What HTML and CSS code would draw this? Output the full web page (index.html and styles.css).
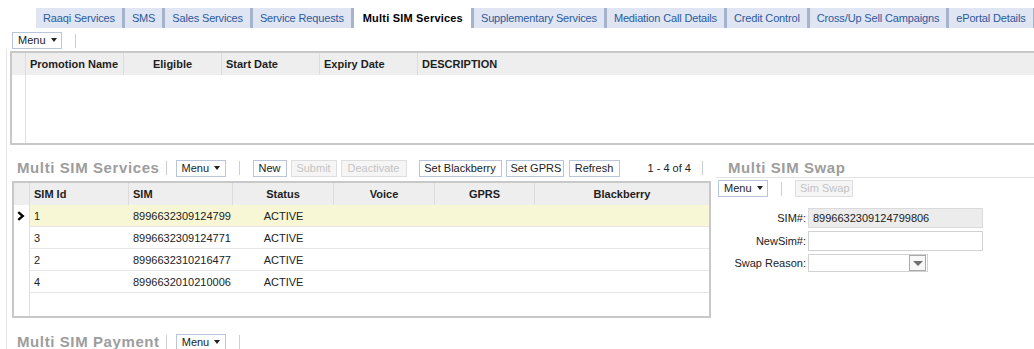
FILE: index.html
```html
<!DOCTYPE html>
<html>
<head>
<meta charset="utf-8">
<title>Multi SIM Services</title>
<link rel="stylesheet" href="styles.css">
</head>
<body>
<div class="tabs">
  <span class="tab">Raaqi Services</span>
  <span class="tab">SMS</span>
  <span class="tab">Sales Services</span>
  <span class="tab">Service Requests</span>
  <span class="tab tab-active">Multi SIM Services</span>
  <span class="tab">Supplementary Services</span>
  <span class="tab">Mediation Call Details</span>
  <span class="tab">Credit Control</span>
  <span class="tab">Cross/Up Sell Campaigns</span>
  <span class="tab">ePortal Details</span>
  <span class="tab tab-rest"></span>
</div>

<div class="toolbar top-toolbar">
  <button type="button" class="btn btn-menu">Menu <span class="caret"></span></button>
  <span class="vsep vsep-wide"></span>
</div>

<div class="main">
  <div class="grid promo-grid">
    <table class="grid-table">
      <colgroup>
        <col class="c-rh-promo"><col class="c-98"><col class="c-98"><col class="c-98"><col class="c-98"><col>
      </colgroup>
      <thead>
        <tr>
          <th class="rh"></th>
          <th>Promotion Name</th>
          <th class="center">Eligible</th>
          <th>Start Date</th>
          <th>Expiry Date</th>
          <th class="last">DESCRIPTION</th>
        </tr>
      </thead>
      <tbody>
        <tr class="empty-body">
          <td class="rh"></td><td></td><td></td><td></td><td></td><td></td>
        </tr>
      </tbody>
    </table>
  </div>

  <div class="section">
    <div class="left-col">
      <div class="sec-head">
        <h2 class="sec-title">Multi SIM Services</h2>
        <span class="vsep vsep-title"></span>
        <button type="button" class="btn btn-menu">Menu <span class="caret"></span></button>
        <span class="vsep vsep-wide"></span>
        <button type="button" class="btn w-new">New</button>
        <button type="button" class="btn btn-disabled w-submit">Submit</button>
        <button type="button" class="btn btn-disabled w-deact">Deactivate</button>
        <button type="button" class="btn w-bb">Set Blackberry</button>
        <button type="button" class="btn w-gprs">Set GPRS</button>
        <button type="button" class="btn w-refresh">Refresh</button>
        <span class="count">1 - 4 of 4</span>
        <span class="vsep vsep-count"></span>
      </div>

      <div class="grid sim-grid">
        <table class="grid-table">
          <colgroup>
            <col class="c-rh"><col class="c-id"><col class="c-sim"><col class="c-status"><col class="c-voice"><col class="c-gprs"><col class="c-bb">
          </colgroup>
          <thead>
            <tr>
              <th class="rh"></th>
              <th>SIM Id</th>
              <th>SIM</th>
              <th class="center">Status</th>
              <th class="center">Voice</th>
              <th class="center">GPRS</th>
              <th class="center last">Blackberry</th>
            </tr>
          </thead>
          <tbody>
            <tr class="row selected">
              <td class="rh"><svg class="chev" width="8" height="10" viewBox="0 0 8 10"><path d="M1.3 1.2 L5.8 5 L1.3 8.8" fill="none" stroke="#000" stroke-width="2.3"/></svg></td>
              <td>1</td><td>8996632309124799</td><td class="center">ACTIVE</td><td></td><td></td><td></td>
            </tr>
            <tr class="row">
              <td class="rh"></td>
              <td>3</td><td>8996632309124771</td><td class="center">ACTIVE</td><td></td><td></td><td></td>
            </tr>
            <tr class="row">
              <td class="rh"></td>
              <td>2</td><td>8996632310216477</td><td class="center">ACTIVE</td><td></td><td></td><td></td>
            </tr>
            <tr class="row">
              <td class="rh"></td>
              <td>4</td><td>8996632010210006</td><td class="center">ACTIVE</td><td></td><td></td><td></td>
            </tr>
            <tr class="filler">
              <td class="rh"></td><td></td><td></td><td></td><td></td><td></td><td></td>
            </tr>
          </tbody>
        </table>
      </div>
    </div>

    <div class="right-col">
      <h2 class="sec-title swap-title">Multi SIM Swap</h2>
      <div class="toolbar swap-toolbar">
        <button type="button" class="btn btn-menu">Menu <span class="caret"></span></button>
        <span class="vsep vsep-wide"></span>
        <button type="button" class="btn btn-disabled w-swap">Sim Swap</button>
      </div>
      <div class="form">
        <label class="lbl">SIM#:</label>
        <div class="field field-readonly">8996632309124799806</div>
        <label class="lbl">NewSim#:</label>
        <div class="field"></div>
        <label class="lbl">Swap Reason:</label>
        <div class="select">
          <span class="select-btn"><span class="select-arrow"></span></span>
        </div>
      </div>
    </div>
  </div>

  <div class="sec-head payment-head">
    <h2 class="sec-title">Multi SIM Payment</h2>
    <span class="vsep vsep-title"></span>
    <button type="button" class="btn btn-menu">Menu <span class="caret"></span></button>
    <span class="vsep vsep-wide"></span>
  </div>
</div>
</body>
</html>
```

FILE: styles.css
```css
* { box-sizing: border-box; }

html, body {
  margin: 0;
  padding: 0;
  background: #fff;
  overflow: hidden;
}

body {
  width: 1034px;
  height: 349px;
  font-family: Tahoma, "Liberation Sans", Arial, sans-serif;
  font-size: 11px;
  color: #222;
}

/* ---------- tabs ---------- */
.tabs {
  display: flex;
  margin-top: 8px;
  padding-left: 36px;
  height: 20px;
  white-space: nowrap;
  overflow: hidden;
}

.tab {
  flex: none;
  background: #dfe5f2;
  color: #2d5a9e;
  padding: 0 7px;
  letter-spacing: -0.15px;
  line-height: 20px;
  border-right: 3px solid #a7b2cb;
}

.tab-active {
  background: #fff;
  color: #000;
  font-weight: bold;
  padding: 0 8px 0 9px;
  letter-spacing: 0.2px;
}

.tab-rest {
  flex: 1;
  padding: 0;
  border-right: none;
}

/* ---------- toolbars / buttons ---------- */
.toolbar {
  display: flex;
  align-items: center;
  height: 17px;
}

.top-toolbar {
  margin-top: 4px;
  padding-left: 12px;
}

.btn {
  height: 17px;
  margin: 0;
  padding: 0 4px;
  border: 1px solid #b9c5db;
  background: #fff;
  font-family: inherit;
  font-size: 11px;
  line-height: 15px;
  color: #222;
  text-align: center;
  white-space: nowrap;
}

.btn-disabled {
  color: #c4c4c4;
  border-color: #dedede;
  background: #f5f5f5;
}

.btn-menu {
  width: 50px;
  text-align: left;
  padding-left: 5px;
}

.caret {
  display: inline-block;
  width: 0;
  height: 0;
  margin-left: 2px;
  vertical-align: 2px;
  border-left: 3.5px solid transparent;
  border-right: 3.5px solid transparent;
  border-top: 4px solid #222;
}

.vsep {
  display: inline-block;
  width: 1px;
  height: 14px;
  background: #cfcfcf;
}

.vsep-wide { margin: 0 13px 0 13px; }
.vsep-title { margin: 0 9px 0 6px; align-self: center; }
.vsep-count { margin-left: 11px; }

.w-new { width: 34px; }
.w-submit { width: 46px; margin-left: 4px; }
.w-deact { width: 66px; margin-left: 4px; }
.w-bb { width: 83px; margin-left: 12px; }
.w-gprs { width: 58px; margin-left: 4px; }
.w-refresh { width: 51px; margin-left: 5px; }
.w-swap { width: 58px; }

.count {
  margin-left: 28px;
  color: #222;
}

/* ---------- main area ---------- */
.main {
  margin-left: 6px;
  border-left: 1px solid #e6e6e6;
  padding-top: 2px;
}

.grid {
  border: 2px solid #c8c8c8;
  background: #fff;
}

.grid-table {
  border-collapse: separate;
  border-spacing: 0;
  table-layout: fixed;
  width: 100%;
}

.grid-table th {
  height: 22px;
  padding: 0 4px;
  background: #eeeeee;
  font-weight: bold;
  text-align: left;
  color: #1e1e1e;
  border-right: 1px solid #dcdcdc;
  white-space: nowrap;
}

.grid-table th.last { border-right: none; }
.grid-table .center { text-align: center; }

.grid-table td {
  padding: 0 4px;
  white-space: nowrap;
}

.grid-table td.rh {
  border-right: 1px solid #e0e0e0;
  padding: 0;
}

.promo-grid {
  margin-left: 3px;
  width: 1040px;
}

.c-rh-promo { width: 14px; }
.c-98 { width: 98px; }

.empty-body td { height: 68px; }

/* ---------- section 2 ---------- */
.section {
  display: flex;
  margin-top: 13px;
}

.left-col {
  width: 704px;
  flex: none;
}

.sec-head {
  display: flex;
  align-items: flex-start;
  height: 20px;
  padding-left: 10px;
}

.sec-head .btn,
.sec-head .count {
  margin-top: 2px;
}

.sec-head .count { line-height: 17px; }

.sec-head .vsep-wide,
.sec-head .vsep-count { margin-top: 3px; }

.sec-title {
  margin: 0;
  font-size: 15px;
  line-height: 20px;
  font-weight: bold;
  letter-spacing: 0.6px;
  color: #9d9d9d;
  white-space: nowrap;
}

.sim-grid {
  margin-top: 3px;
  margin-left: 5px;
  width: 699px;
}

.c-rh { width: 16px; }
.c-id { width: 99px; }
.c-sim { width: 104px; }
.c-status { width: 101px; }
.c-voice { width: 101px; }
.c-gprs { width: 100px; }
.c-bb { width: 174px; }

.row td {
  height: 22px;
  border-bottom: 1px solid #e6e6e6;
}

.row td.rh { border-bottom: none; text-align: center; }

.row.selected td { background: #f7f7d6; }
.row.selected td.rh { background: #fff; }

.chev { display: block; margin: 0 0 0 3px; }

.filler td { height: 23px; }

/* ---------- right column ---------- */
.right-col {
  flex: 1;
  margin-left: 5px;
}

.swap-title {
  height: 20px;
  line-height: 19px;
  padding-left: 12px;
  border-bottom: 1px solid #e2e2e2;
}

.swap-toolbar {
  margin-top: 2px;
  padding-left: 2px;
}

.form {
  display: grid;
  grid-template-columns: 90px 175px;
  column-gap: 2px;
  row-gap: 3px;
  margin-top: 11px;
  align-items: center;
}

.lbl {
  text-align: right;
  color: #222;
}

.field {
  height: 20px;
  border: 1px solid #d2d2d2;
  background: #fff;
  line-height: 18px;
  padding-left: 4px;
}

.field-readonly {
  background: #ececec;
  border-color: #dadada;
}

.select {
  position: relative;
  width: 120px;
  height: 18px;
  border: 1px solid #d2d2d2;
  background: #fff;
}

.select-btn {
  position: absolute;
  right: 1px;
  top: 0;
  width: 17px;
  height: 16px;
  border: 1px solid #a9a9a9;
  background: #f7f7f7;
  display: flex;
  align-items: center;
  justify-content: center;
}

.select-arrow {
  width: 0;
  height: 0;
  border-left: 5px solid transparent;
  border-right: 5px solid transparent;
  border-top: 5px solid #6e6e6e;
}

/* ---------- section 3 ---------- */
.payment-head {
  margin-top: 14px;
}
```
